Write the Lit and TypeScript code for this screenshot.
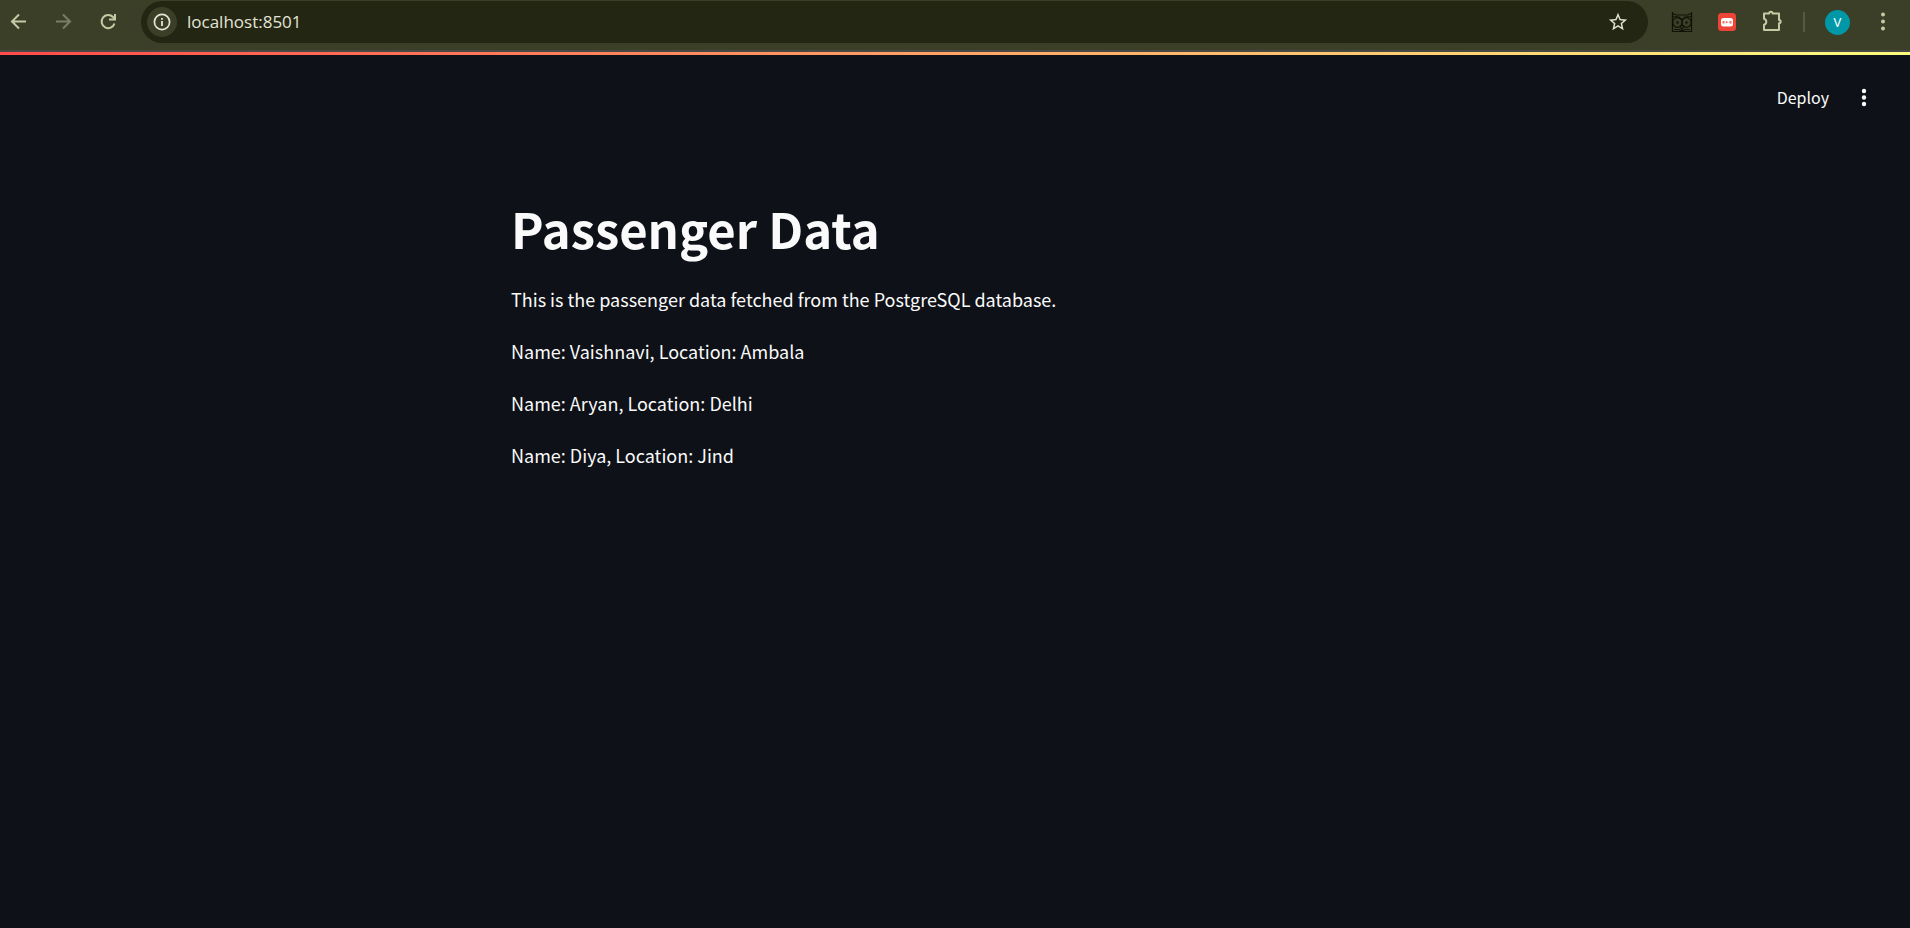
import { LitElement, html, css } from "lit";
import { customElement, property } from "lit/decorators.js";

interface Passenger {
  name: string;
  location: string;
}

@customElement("browser-toolbar")
class BrowserToolbar extends LitElement {
  @property() host = "";
  @property() port = "";

  static styles = css`
    :host {
      display: flex;
      align-items: center;
      box-sizing: border-box;
      height: 52px;
      padding: 0 15px 6px 6px;
      background: #3c3f27;
      border-bottom: 2px solid #484845;
      color: #c5caa5;
      font-family: "Open Sans", "Noto Sans", sans-serif;
    }
    button {
      display: flex;
      align-items: center;
      justify-content: center;
      flex: none;
      width: 24px;
      height: 24px;
      padding: 0;
      border: 0;
      background: none;
      color: inherit;
      font: inherit;
    }
    svg {
      display: block;
      flex: none;
    }
    .nav {
      display: flex;
      gap: 21px;
      margin-right: 21px;
    }
    .nav button:disabled {
      color: #7b7d66;
    }
    .address {
      display: flex;
      align-items: center;
      flex: 1;
      box-sizing: border-box;
      height: 42px;
      padding: 0 18px 0 6px;
      border-radius: 21px;
      background: #232612;
      color: #e4e4d6;
    }
    .address .info {
      width: 30px;
      height: 30px;
      border-radius: 15px;
      background: #3c3f27;
    }
    .address input {
      flex: 1;
      min-width: 0;
      height: 24px;
      margin: 0 10px;
      padding: 0;
      border: 0;
      outline: 0;
      background: none;
      color: #e4e4d6;
      font: 400 17px/24px "Open Sans", "Noto Sans", sans-serif;
    }
    .extensions {
      display: flex;
      align-items: center;
      gap: 21px;
      margin-left: 22px;
    }
    .divider {
      width: 2px;
      height: 20px;
      margin: 0 -1px 0 -2px;
      background: #575a40;
    }
    .extensions .avatar {
      width: 25px;
      height: 25px;
      border-radius: 50%;
      background: #0097a7;
      color: #fff;
      font: 400 13px/25px Roboto, sans-serif;
    }
  `;

  render() {
    return html`
      <nav class="nav" aria-label="History">
        <button aria-label="Back">
          <svg width="24" height="24" viewBox="0 0 24 24" fill="none" stroke="currentColor" stroke-width="2">
            <path d="M20 11.500H6.500M13 4.500 6 11.500l7 7" />
          </svg>
        </button>
        <button aria-label="Forward" disabled>
          <svg width="24" height="24" viewBox="0 0 24 24" fill="none" stroke="currentColor" stroke-width="2">
            <path d="M5 11.500h13.500M12 4.500l7 7-7 7" />
          </svg>
        </button>
        <button aria-label="Reload">
          <svg width="24" height="24" viewBox="0 0 24 24" fill="none" stroke="currentColor" stroke-width="2">
            <path d="M18.500 13.500A6.600 6.600 0 1 1 17 7L19 9.500M19 4v5.500H13" />
          </svg>
        </button>
      </nav>
      <div class="address">
        <button class="info" aria-label="Site information">
          <svg width="18" height="18" viewBox="0 0 18 18">
            <circle cx="9" cy="9" r="7.600" fill="none" stroke="currentColor" stroke-width="1.700" />
            <path d="M8.100 8h1.800v5H8.100zM8.100 5h1.800v1.800H8.100z" fill="currentColor" />
          </svg>
        </button>
        <input aria-label="Address" .value=${this.host + ":" + this.port} />
        <button aria-label="Bookmark this page">
          <svg width="22" height="22" viewBox="0 0 24 24" fill="currentColor">
            <path
              d="M22 9.240l-7.190-.62L12 2 9.190 8.630 2 9.240l5.460 4.730L5.820 21 12 17.270 18.180 21l-1.630-7.030L22 9.240zM12 15.400l-3.760 2.270 1-4.280-3.320-2.880 4.380-.38L12 6.100l1.710 4.040 4.380.38-3.320 2.880 1 4.280L12 15.400z"
            />
          </svg>
        </button>
      </div>
      <div class="extensions">
        <button aria-label="Owl extension">
          <svg width="22" height="22" viewBox="0 0 22 22" fill="none" stroke="#101208" stroke-width="1.200">
            <path d="M1.500 1v19.500h19V1M1.500 2.500l4 1.500h11l4-1.500M2 5.500l6 .5 3 3 3-3 6-.5M3 18.500h5l3 1.500 3-1.500h5" />
            <circle cx="6.500" cy="11.500" r="4.800" />
            <circle cx="15.500" cy="11.500" r="4.800" />
            <circle cx="6.500" cy="11.500" r=".6" />
            <circle cx="15.500" cy="11.500" r=".6" />
            <path d="M9 15.500l2 3 2-3-2-1.500z" />
          </svg>
        </button>
        <button aria-label="Recorder extension">
          <svg width="18" height="18" viewBox="0 0 18 18">
            <rect width="18" height="18" rx="3.500" fill="#ee4438" />
            <rect x="3" y="5" width="12" height="8.500" rx="2.500" fill="#fff" />
            <path d="M4.500 8h2v2.500h-2zM7.800 7.800l2.600 1.400-2.600 1.400zM11.500 8h2v2.500h-2z" fill="#ee7069" />
          </svg>
        </button>
        <button aria-label="Extensions">
          <svg width="24" height="24" viewBox="0 0 24 24" fill="none" stroke="currentColor" stroke-width="2" stroke-linejoin="round">
            <path
              d="M4 3.500h5.200a1.700 1.700 0 0 1 3.400 0H19v6.400a1.700 1.700 0 0 1 0 3.400v6.700H4v-5.200a3.100 3.100 0 0 0 0-6z"
            />
          </svg>
        </button>
        <span class="divider"></span>
        <button class="avatar" aria-label="Profile">V</button>
        <button aria-label="Browser menu">
          <svg width="24" height="24" viewBox="0 0 24 24" fill="currentColor">
            <circle cx="12" cy="4.500" r="2" />
            <circle cx="12" cy="11.500" r="2" />
            <circle cx="12" cy="18.500" r="2" />
          </svg>
        </button>
      </div>
    `;
  }
}

@customElement("app-root")
class AppRoot extends LitElement {
  static styles = css`
    :host {
      display: block;
      min-height: 100vh;
      background: #0e1117;
      color: #fafafa;
      font: 400 18px/32px "Noto Sans CJK SC", "Noto Sans", sans-serif;
    }
    .decoration {
      height: 3px;
      background: linear-gradient(90deg, #ff4b4b, #fffd80);
    }
    header {
      display: flex;
      align-items: center;
      justify-content: flex-end;
      gap: 23px;
      height: 84px;
      padding: 0 34px;
    }
    header button {
      padding: 0;
      border: 0;
      background: none;
      color: inherit;
      font: inherit;
      font-size: 16px;
    }
    header svg {
      display: block;
    }
    main {
      box-sizing: border-box;
      max-width: 920px;
      margin: 0 auto;
      padding: 56px 16px;
    }
    h1 {
      margin: 0 0 22px;
      font-size: 49px;
      line-height: 66px;
      font-weight: 700;
    }
    p {
      margin: 0 0 20px;
    }
  `;

  private passengers: Passenger[] = [
    { name: "Vaishnavi", location: "Ambala" },
    { name: "Aryan", location: "Delhi" },
    { name: "Diya", location: "Jind" },
  ];

  render() {
    return html`
      <browser-toolbar host="localhost" port="8501"></browser-toolbar>
      <div class="decoration"></div>
      <header>
        <button>Deploy</button>
        <button aria-label="Main menu">
          <svg width="24" height="24" viewBox="0 0 24 24" fill="currentColor">
            <circle cx="12" cy="6" r="2.200" />
            <circle cx="12" cy="12.500" r="2.200" />
            <circle cx="12" cy="19" r="2.200" />
          </svg>
        </button>
      </header>
      <main>
        <h1>Passenger Data</h1>
        <p>This is the passenger data fetched from the PostgreSQL database.</p>
        ${this.passengers.map((p) => html`<p>Name: ${p.name}, Location: ${p.location}</p>`)}
      </main>
    `;
  }
}
